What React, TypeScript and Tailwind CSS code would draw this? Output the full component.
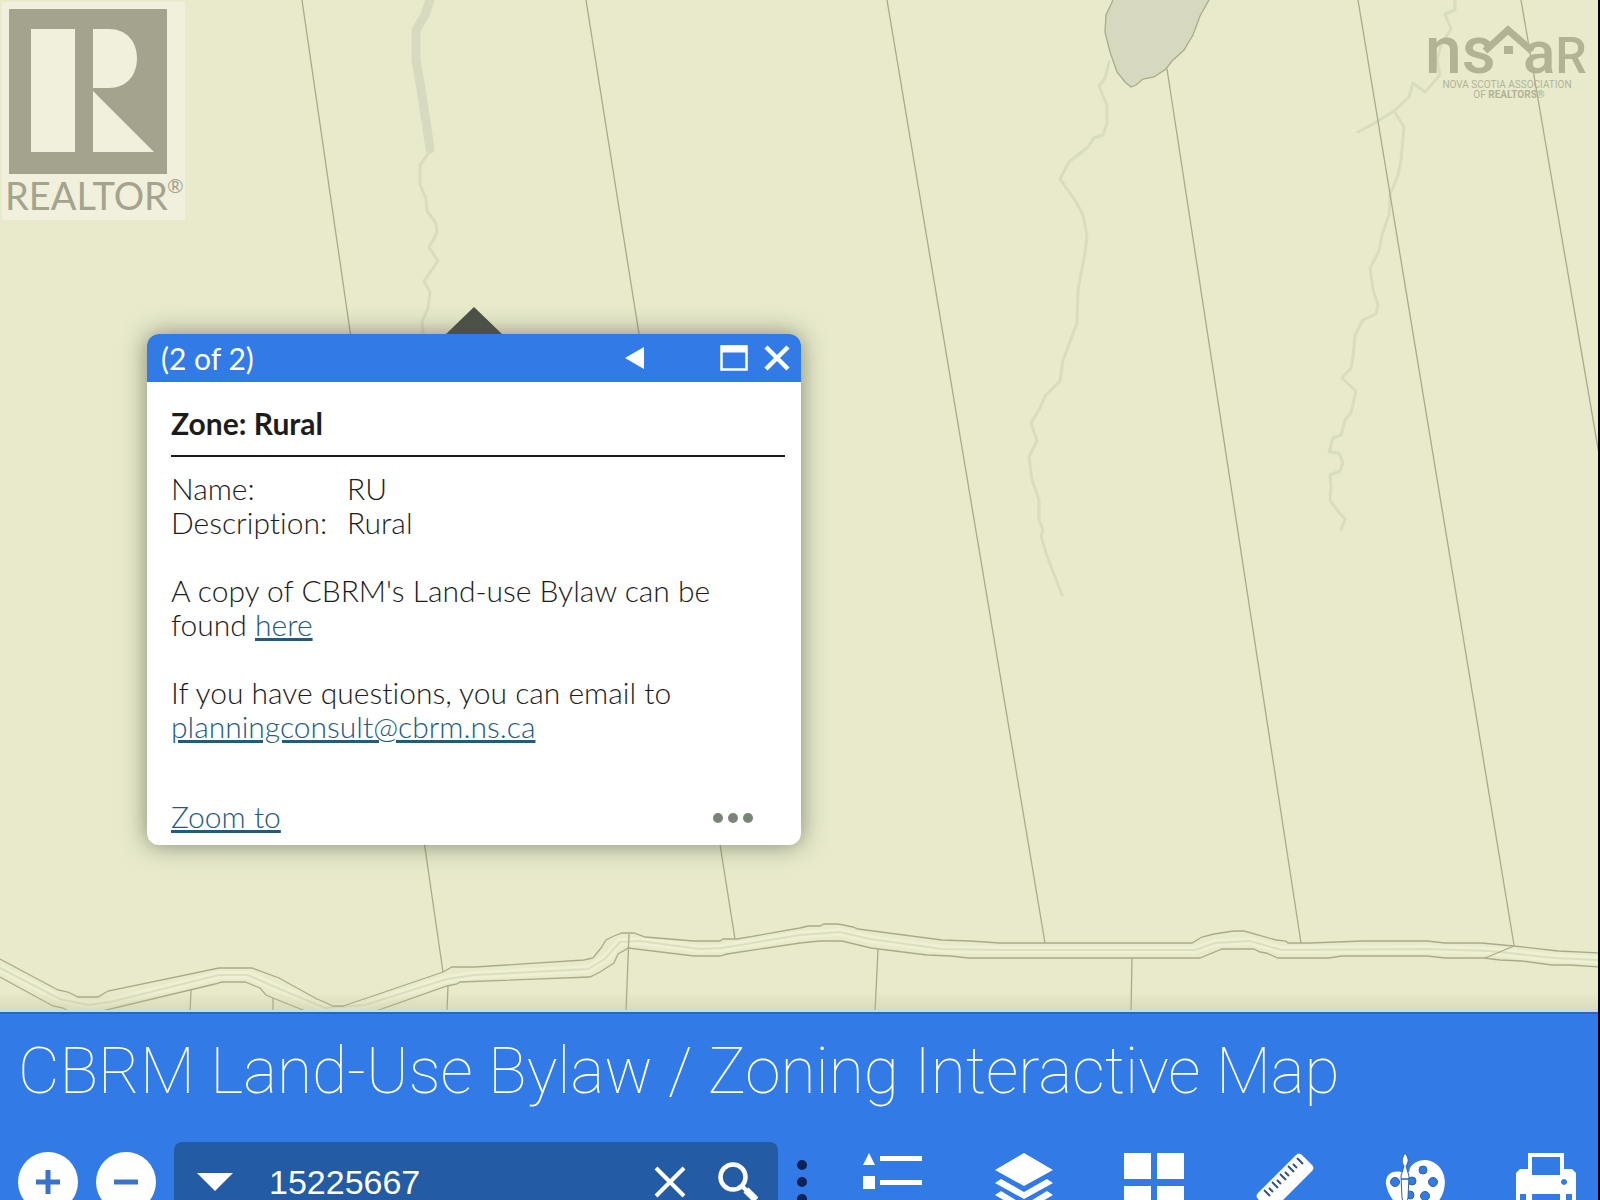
import type { ReactNode } from "react";

const lotLines = [
  "M302 0 L443 972",
  "M586 0 L735 939",
  "M887 0 L1045 943",
  "M1167 69 L1301 943",
  "M1358 0 L1514 945",
  "M1521 0 L1600 460",
  "M191 990 L190 1012",
  "M273 998 L273 1012",
  "M448 985 L447 1012",
  "M629 934 L626 1012",
  "M878 949 L875 1012",
  "M1132 958 L1131 1012",
  "M1514 946 L1485 958",
];

const roadTop =
  "0,959 58,990 68,992 78,997 98,997 108,991 219,968 252,968 279,978 317,999 322,1001 333,1006 343,1006 352,1003 367,998 443,972 452,967 475,967 584,960 593,958 601,948 606,940 614,936 622,933 634,933 645,937 694,941 720,941 723,939 737,939 800,928 808,926 820,926 824,924 838,924 853,927 858,929 942,940 970,941 1000,943 1192,943 1202,937 1214,934 1234,931 1244,931 1276,940 1286,941 1288,943 1310,943 1363,941 1427,941 1445,943 1481,943 1514,946 1558,951 1600,953";

const roadBottom =
  "0,977 53,1006 63,1008 70,1012 98,1012 190,990 215,984 222,982 245,982 260,988 266,995 273,998 308,1012 373,1012 447,986 457,984 460,982 590,977 600,972 614,963 618,954 625,950 628,948 694,956 720,956 727,954 800,943 820,941 842,941 871,948 927,955 951,956 968,958 1200,958 1222,949 1254,949 1260,952 1266,953 1278,958 1329,958 1342,956 1427,956 1445,958 1484,958 1500,960 1522,961 1552,965 1570,965 1600,967";

const roadCenter =
  "0,968 60,999 88,1005 110,1002 219,975 248,975 275,987 325,1008 365,1005 447,979 475,975 588,969 605,959 620,942 640,941 700,949 722,948 800,935 840,932 870,939 942,949 1000,950 1195,950 1215,943 1250,941 1282,950 1427,949 1490,951 1555,958 1600,960";

const streams = [
  "1109,62 1105,78 1099,86 1107,105 1107,123 1103,135 1094,138 1088,147 1069,162 1060,179 1075,200 1083,215 1087,236 1085,253 1078,290 1077,323 1070,342 1063,360 1060,381 1045,396 1040,408 1031,423 1037,441 1029,457 1032,480 1039,500 1039,520 1043,530 1041,536 1047,556 1062,595",
  "1455,0 1455,10 1445,14 1451,29 1441,45 1437,60 1440,75 1425,92 1413,83 1409,97 1394,111 1373,124 1358,132",
  "1394,111 1404,127 1401,160 1398,175 1390,195 1389,215 1382,235 1379,251 1370,268 1373,290 1378,305 1376,314 1363,320 1355,335 1353,357 1351,368 1342,378 1356,391 1351,413 1345,420 1341,435 1333,438 1329,452 1339,453 1343,463 1340,471 1330,475 1331,487 1330,500 1337,510 1345,519 1341,530",
  "428,154 420,165 420,185 426,198 427,211 436,223 437,233 429,247 438,261 424,281 430,292 428,308 422,322 424,340",
];

const MapCanvas = () => (
  <svg
    className="absolute inset-0 h-full w-full"
    viewBox="0 0 1598 1012"
    preserveAspectRatio="none"
    fill="none"
    aria-hidden="true"
  >
    <g stroke="#dadcc0" strokeWidth="3" strokeLinejoin="round" strokeLinecap="round">
      {streams.map((points) => (
        <polyline key={points} points={points} />
      ))}
    </g>
    <polyline
      points="430,0 425,15 416,30 416,60 422,95 430,149"
      stroke="#d7dabf"
      strokeWidth="9"
      strokeLinejoin="round"
      strokeLinecap="round"
    />
    <path
      d="M1113 0 L1106 15 L1105 32 L1110 52 L1117 72 L1125 82 L1131 87 L1136 85 L1143 79 L1154 77 L1166 69 L1172 61 L1184 50 L1193 35 L1200 16 L1209 0"
      fill="#d6d9bf"
      stroke="#a9ab8b"
      strokeWidth="1.3"
    />
    <polyline points={roadCenter} stroke="#eeefd3" strokeWidth="8" />
    <polyline points={roadCenter} stroke="#dcdfbf" strokeWidth="2" />
    <g stroke="#a9ab88" strokeWidth="1.3">
      <polyline points={roadTop} />
      <polyline points={roadBottom} />
      {lotLines.map((d) => (
        <path key={d} d={d} />
      ))}
    </g>
  </svg>
);

const RealtorLogo = () => (
  <svg className="absolute left-0 top-0" width="190" height="222" viewBox="0 0 190 222" role="img" aria-label="REALTOR">
    <rect x="2" y="2" width="183" height="218" fill="#f0f0dc" />
    <rect x="9" y="9" width="158" height="165" fill="#a4a38e" />
    <path
      d="M31 29 H75 V152 H31 Z M93 29 H109 C126 29 137 41 137 58 C137 76 126 88 109 88 H93 Z M93 91 L154 152 H93 Z"
      fill="#f0f0dc"
    />
    <text x="5" y="210" fontSize="38" fill="#a4a38e" className="font-['Lato']">
      REALTOR
    </text>
    <text x="167" y="193" fontSize="20" fill="#a4a38e" className="font-['Lato']">
      ®
    </text>
  </svg>
);

const NsarLogo = () => (
  <svg
    className="absolute right-0 top-0 font-['Roboto',sans-serif]"
    width="178"
    height="110"
    viewBox="1420 0 178 110"
    fill="#b1b296"
    role="img"
    aria-label="nsar"
  >
    <text x="1425" y="73" fontSize="66" fontWeight="500">ns</text>
    <path d="M1485 51 L1508 30 L1532 51" fill="none" stroke="#b1b296" strokeWidth="7" />
    <rect x="1504" y="46" width="9" height="8" />
    <text x="1523" y="73" fontSize="60" fontWeight="500">
      a<tspan fontSize="50">R</tspan>
    </text>
    <text x="1507" y="88" fontSize="10" textAnchor="middle">NOVA SCOTIA ASSOCIATION</text>
    <text x="1509" y="98" fontSize="10" textAnchor="middle">
      OF <tspan fontWeight="bold">REALTORS®</tspan>
    </text>
  </svg>
);

const Popup = () => (
  <section className="absolute left-[147px] top-[334px] w-[654px] rounded-xl bg-white font-['Lato',sans-serif] text-[30px] leading-[34px] font-light text-[#1c1c1c] shadow-[0_0_24px_rgba(60,70,50,0.6)] [font-variant-ligatures:none]">
    <svg className="absolute -top-[27px] left-[299px]" width="56" height="27" viewBox="0 0 56 27" aria-hidden="true">
      <path d="M28 0 L56 27 H0 Z" fill="#4a5246" />
    </svg>
    <header className="flex h-12 items-center rounded-t-xl bg-[#327be6] pl-3.5 pr-2.5 text-white">
      <span className="flex-1 font-normal">(2 of 2)</span>
      <button aria-label="Previous feature" className="mr-[75px]">
        <svg width="20" height="22" viewBox="0 0 20 22" fill="white">
          <path d="M0 11 L19 0 V22 Z" />
        </svg>
      </button>
      <button aria-label="Maximize" className="mr-[15px]">
        <svg width="28" height="26" viewBox="0 0 28 26" fill="none" stroke="white">
          <rect x="1.5" y="1.5" width="25" height="23" strokeWidth="2.5" />
          <path d="M1 4 H27" strokeWidth="7" />
        </svg>
      </button>
      <button aria-label="Close">
        <svg width="28" height="26" viewBox="0 0 28 26" stroke="white" strokeWidth="4.5">
          <path d="M3 2 L25 24 M25 2 L3 24" />
        </svg>
      </button>
    </header>
    <div className="px-6 pt-6">
      <h2 className="-mr-2 border-b-2 border-[#1c1c1c] pb-[15px] font-bold">Zone: Rural</h2>
      <dl className="mt-3.5 grid grid-cols-[176px_1fr]">
        <dt>Name:</dt>
        <dd>RU</dd>
        <dt>Description:</dt>
        <dd>Rural</dd>
      </dl>
      <p className="mt-[34px]">
        A copy of CBRM's Land-use Bylaw can be found{" "}
        <a href="#bylaw" className="text-[#235a80] underline">here</a>
      </p>
      <p className="mt-[34px]">
        If you have questions, you can email to{" "}
        <a href="mailto:planningconsult@cbrm.ns.ca" className="text-[#235a80] underline">
          planningconsult@cbrm.ns.ca
        </a>
      </p>
      <div className="mt-14 flex items-center justify-between pb-3 pr-6">
        <a href="#zoom" className="text-[#235a80] underline">Zoom to</a>
        <button aria-label="More options" className="flex gap-[5px] pt-1">
          <span className="size-2.5 rounded-full bg-[#7a8578]" />
          <span className="size-2.5 rounded-full bg-[#7a8578]" />
          <span className="size-2.5 rounded-full bg-[#7a8578]" />
        </button>
      </div>
    </div>
  </section>
);

const ToolButton = ({ label, children }: { label: string; children: ReactNode }) => (
  <button aria-label={label}>
    <svg width="60" height="60" viewBox="0 0 60 60" fill="white">
      {children}
    </svg>
  </button>
);

const Toolbar = () => (
  <div className="flex h-20 items-center pl-[18px] pr-[22px]">
    <ToolButton label="Zoom in">
      <circle cx="30" cy="30" r="30" />
      <path d="M18 30 H42 M30 18 V42" stroke="#3a73c9" strokeWidth="5" />
    </ToolButton>
    <div className="ml-[18px] flex">
      <ToolButton label="Zoom out">
        <circle cx="30" cy="30" r="30" />
        <path d="M18 30 H42" stroke="#3a73c9" strokeWidth="5" />
      </ToolButton>
    </div>
    <form className="ml-[18px] flex h-full w-[604px] items-center rounded-lg bg-[#235ba4] pl-[23px] pr-5">
      <button type="button" aria-label="Search source">
        <svg width="36" height="18" viewBox="0 0 36 18" fill="white">
          <path d="M0 0 H36 L18 18 Z" />
        </svg>
      </button>
      <input
        aria-label="Search"
        defaultValue="15225667"
        className="ml-9 min-w-0 flex-1 bg-transparent font-['Liberation_Sans',sans-serif] text-[34px] text-white outline-none"
      />
      <button type="button" aria-label="Clear search" className="mr-8">
        <svg width="32" height="32" viewBox="0 0 32 32" stroke="white" strokeWidth="4">
          <path d="M2 2 L30 30 M30 2 L2 30" />
        </svg>
      </button>
      <button type="button" aria-label="Run search">
        <svg width="40" height="40" viewBox="0 0 40 40" fill="none" stroke="white">
          <circle cx="15" cy="15" r="12.5" strokeWidth="4.5" />
          <path d="M24 24 L29 29" strokeWidth="4" />
          <path d="M28 28 L38 38" strokeWidth="7" />
        </svg>
      </button>
    </form>
    <div className="ml-[19px] flex flex-col gap-[7px]">
      <span className="size-2.5 rounded-full bg-[#0b2254]" />
      <span className="size-2.5 rounded-full bg-[#0b2254]" />
      <span className="size-2.5 rounded-full bg-[#0b2254]" />
    </div>
    <nav className="ml-14 flex flex-1 justify-between">
      <ToolButton label="Legend">
        <path d="M6 1 L12 13 H0 Z M17 4 H59 V9 H17 Z M0 24 H12 V37 H0 Z M17 28 H59 V33 H17 Z M17 51 H59 V56 H17 Z" />
        <circle cx="6" cy="54" r="6" />
      </ToolButton>
      <ToolButton label="Layers">
        <path d="M30 1 L59 18 L30 34 L1 18 Z M1 31 L7 27 L30 40 L53 27 L59 31 L30 47 Z M1 43 L7 39 L30 53 L53 39 L59 43 L30 60 Z" />
      </ToolButton>
      <ToolButton label="Basemap gallery">
        <path d="M0 1 H27 V27 H0 Z M33 1 H60 V27 H33 Z M0 34 H27 V60 H0 Z M33 34 H60 V60 H33 Z" />
      </ToolButton>
      <ToolButton label="Measurement">
        <path d="M41 3 Q44 0 47 3 L57 13 Q60 16 57 19 L19 57 Q16 60 13 57 L3 47 Q0 44 3 41 Z" />
        <path
          d="M42 6 L48 12 M38 12 L42 16 M33 14 L39 20 M30 20 L34 24 M25 22 L31 28 M22 28 L26 32 M17 30 L23 36 M14 36 L18 40 M9 38 L15 44"
          stroke="#34547f"
          strokeWidth="2"
        />
      </ToolButton>
      <ToolButton label="Draw">
        <path d="M16 20 C6 18 0 24 1 32 C3 45 13 57 26 59 C35 60 34 52 38 50 C44 48 50 54 55 47 C62 36 62 20 51 12 C42 5 30 8 25 16 L24 20 Z" />
        <g fill="#327be6" stroke="#2c62a8">
          <circle cx="10" cy="30" r="4.5" />
          <circle cx="27" cy="29" r="4" />
          <circle cx="38" cy="18" r="4" />
          <circle cx="48" cy="30" r="4.5" />
          <circle cx="40" cy="44" r="4.5" />
          <circle cx="25" cy="43" r="4" />
        </g>
        <path
          d="M20 1 C24 6 24 10 21 14 L24 24 L23 46 L20 58 L17 46 L16 24 L19 14 C16 10 17 6 20 1 Z"
          stroke="#2c62a8"
        />
        <path d="M16 27 H24" stroke="#2c62a8" strokeWidth="1.5" />
      </ToolButton>
      <ToolButton label="Print">
        <path
          fillRule="evenodd"
          d="M12 1 H48 V17 H56 L60 21 V52 H50 V60 H10 V52 H0 V21 L4 17 H12 Z M16 5 V23 H44 V5 Z M48 27 a3 3 0 1 0 0.1 0 Z M4 42 V50 H10 V42 Z M16 42 V56 H44 V42 Z M50 42 V50 H56 V42 Z"
        />
      </ToolButton>
    </nav>
  </div>
);

const App = () => {
  return (
    <div className="flex h-screen flex-col overflow-hidden border-r-2 border-black bg-[#e8eacb]">
      <main className="relative flex-1">
        <MapCanvas />
        <div className="absolute inset-x-0 bottom-0 h-5 border-b-2 border-[#c4dfdc] bg-linear-to-b from-transparent to-[#b5b792]/30" />
        <RealtorLogo />
        <NsarLogo />
        <Popup />
      </main>
      <footer className="h-[188px] shrink-0 border-t-2 border-[#2a66bd] bg-[#327be6]">
        <h1 className="flex h-32 items-center whitespace-nowrap pb-3 pl-[18px] font-['Roboto',sans-serif] text-[64px] font-thin text-white">
          CBRM Land-Use Bylaw / Zoning Interactive Map
        </h1>
        <Toolbar />
      </footer>
    </div>
  );
};

export default App;
